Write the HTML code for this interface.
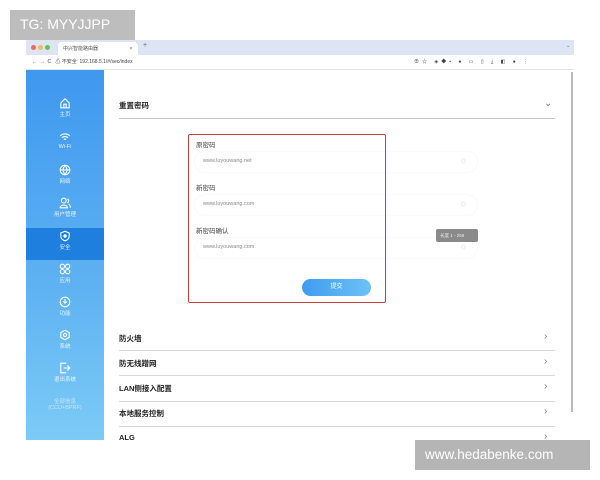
<!DOCTYPE html><html><head><meta charset="utf-8"><style>
*{margin:0;padding:0;box-sizing:border-box}
body{width:600px;height:480px;background:#fff;position:relative;overflow:hidden;font-family:"Liberation Sans","Noto Sans CJK SC",sans-serif}
.a{position:absolute}
.tabbar{left:26px;top:40px;width:548px;height:15px;background:#dde5f4}
.tab{left:58px;top:42px;width:80px;height:13px;background:#fff;border-radius:4px 4px 0 0;font-size:5px;color:#555;padding:3px 5px}
.addr{left:26px;top:55px;width:548px;height:15px;background:#fff;border-bottom:1px solid #e4e4e4;font-size:5px;color:#444}
.side{left:26px;top:70px;width:78px;height:370px;background:linear-gradient(#3f98ef,#5fb3f2 60%,#7ccbf6)}
.si{position:absolute;left:0;width:78px;text-align:center;color:#e8f4ff;font-size:5.5px}
.si svg{display:block;margin:0 auto 1px}
.sel{left:26px;top:228px;width:78px;height:32px;background:#1e7fdf}
.t{font-size:7.5px;color:#222;font-weight:bold}
.line{height:1px;background:#d8d8d8;left:119px;width:436px}
.chev{font-size:10px;color:#777;left:544px}
.inp{left:195px;width:282px;height:20px;border-radius:10px;background:#fff;box-shadow:0 0 2px #eee;font-size:5.5px;color:#888;padding:6px 8px}
.lbl{left:196px;font-size:6.5px;color:#444}
</style></head><body>
<div class="a" style="left:10px;top:10px;width:125px;height:30px;background:#bdbdbd;color:#fff;font-size:14px;padding:6px 10px">TG: MYYJJPP</div>
<div class="a tabbar"></div>
<div class="a" style="left:31px;top:45px;width:5px;height:5px;border-radius:50%;background:#ee6a5f"></div>
<div class="a" style="left:38px;top:45px;width:5px;height:5px;border-radius:50%;background:#f5bd4f"></div>
<div class="a" style="left:45px;top:45px;width:5px;height:5px;border-radius:50%;background:#61c454"></div>
<div class="a tab">中兴智能路由器 <span style="margin-left:30px">×</span></div>
<div class="a" style="left:143px;top:42px;font-size:7px;color:#666">+</div>
<div class="a" style="left:566px;top:43px;font-size:5px;color:#666">⌄</div>
<div class="a addr"><span class="a" style="left:6px;top:3px">←&nbsp;&nbsp;→&nbsp;&nbsp;C&nbsp;&nbsp;&nbsp;⚠ 不安全&nbsp;&nbsp;192.168.5.1/#/sec/index</span><span class="a" style="left:388px;top:3px;letter-spacing:3px">⊕☆ ◈◆▪ ● ▭ ▯ ⤓ ◧ ● ⋮</span></div>
<div class="a side"></div>
<div class="a sel"></div>
<div class="a" style="left:101px;top:241px;width:0;height:0;border:3px solid transparent;border-right-color:#fff"></div>
<div class="a" style="left:26px;top:70px;width:78px">
<div class="si" style="top:27px"><svg width="12" height="12" viewBox="0 0 10 10" fill="none" stroke="#fff" stroke-width=".9"><path d="M1.5 5 5 1.5 8.5 5V9h-7z M4 9V6h2v3"/></svg>主页</div>
<div class="si" style="top:61px"><svg width="12" height="12" viewBox="0 0 10 10" fill="none" stroke="#fff" stroke-width=".9"><path d="M1 4a6 6 0 0 1 8 0M2.5 5.5a4 4 0 0 1 5 0M4 7a2 2 0 0 1 2 0"/></svg>Wi-Fi</div>
<div class="si" style="top:94px"><svg width="12" height="12" viewBox="0 0 10 10" fill="none" stroke="#fff" stroke-width=".9"><circle cx="5" cy="5" r="4"/><path d="M1 5h8M5 1c-2 2.5-2 5.5 0 8M5 1c2 2.5 2 5.5 0 8"/></svg>网络</div>
<div class="si" style="top:127px"><svg width="12" height="12" viewBox="0 0 10 10" fill="none" stroke="#fff" stroke-width=".9"><circle cx="4" cy="3" r="2"/><path d="M1 9c0-3 6-3 6 0zM7 1.5a2 2 0 0 1 0 3.5M8 6c1 .5 1.5 1.5 1.5 3"/></svg>用户管理</div>
<div class="si" style="top:160px"><svg width="12" height="12" viewBox="0 0 10 10" fill="none" stroke="#fff" stroke-width=".9"><path d="M5 1 8.5 2.5V5c0 2-1.5 3.5-3.5 4C3 8.5 1.5 7 1.5 5V2.5z"/><circle cx="5" cy="5" r="1" fill="#fff"/></svg>安全</div>
<div class="si" style="top:193px"><svg width="12" height="12" viewBox="0 0 10 10" fill="none" stroke="#fff" stroke-width=".9"><circle cx="2.8" cy="2.8" r="1.8"/><circle cx="7.2" cy="2.8" r="1.8"/><circle cx="2.8" cy="7.2" r="1.8"/><circle cx="7.2" cy="7.2" r="1.8"/></svg>应用</div>
<div class="si" style="top:226px"><svg width="12" height="12" viewBox="0 0 10 10" fill="none" stroke="#fff" stroke-width=".9"><circle cx="5" cy="5" r="4"/><path d="M5 2.5v3.5M3.5 4.5 5 6l1.5-1.5"/></svg>功能</div>
<div class="si" style="top:259px"><svg width="12" height="12" viewBox="0 0 10 10" fill="none" stroke="#fff" stroke-width=".9"><path d="M5 1 8.5 3v4L5 9 1.5 7V3z"/><circle cx="5" cy="5" r="1.3"/></svg>系统</div>
<div class="si" style="top:292px"><svg width="12" height="12" viewBox="0 0 10 10" fill="none" stroke="#fff" stroke-width=".9"><path d="M6 1H1.5v8H6M4 5h5M7 3l2 2-2 2"/></svg>退出系统</div>
<div class="si" style="top:327px;opacity:.7">全部信息<br>(CCU+BPRF)</div>
</div>
<div class="a t" style="left:119px;top:100px">重置密码</div>
<div class="a chev" style="top:98px">⌄</div>
<div class="a line" style="top:118px;background:#c8c8c8"></div>
<div class="a lbl" style="top:139px">原密码</div>
<div class="a inp" style="top:152px">www.luyouwang.net</div>
<div class="a lbl" style="top:182px">新密码</div>
<div class="a inp" style="top:195px">www.luyouwang.com</div>
<div class="a lbl" style="top:225px">新密码确认</div>
<div class="a inp" style="top:238px">www.luyouwang.com</div>
<div class="a" style="left:461px;top:158px;font-size:5px;color:#ccc">◎</div>
<div class="a" style="left:461px;top:201px;font-size:5px;color:#ccc">◎</div>
<div class="a" style="left:461px;top:244px;font-size:5px;color:#ccc">◎</div>
<div class="a" style="left:436px;top:229px;width:42px;height:13px;background:#8a8a8a;border-radius:2px;color:#eee;font-size:4.5px;padding:4px 4px">长度 1 - 256</div>
<div class="a" style="left:302px;top:279px;width:69px;height:17px;border-radius:9px;background:linear-gradient(90deg,#3e9cef,#6cc2f6);color:#fff;font-size:6px;text-align:center;line-height:17px">提交</div>
<div class="a" style="left:188px;top:134px;width:198px;height:169px;border:1.5px solid #c0403c;border-radius:2px"></div>
<div class="a t" style="left:119px;top:333px">防火墙</div><div class="a chev" style="top:331px">›</div>
<div class="a line" style="top:350px"></div>
<div class="a t" style="left:119px;top:358px">防无线蹭网</div><div class="a chev" style="top:356px">›</div>
<div class="a line" style="top:375px"></div>
<div class="a t" style="left:119px;top:383px">LAN侧接入配置</div><div class="a chev" style="top:381px">›</div>
<div class="a line" style="top:401px"></div>
<div class="a t" style="left:119px;top:408px">本地服务控制</div><div class="a chev" style="top:406px">›</div>
<div class="a line" style="top:426px"></div>
<div class="a t" style="left:119px;top:433px;height:7px;overflow:hidden">ALG</div><div class="a chev" style="top:431px;height:9px;overflow:hidden">›</div>
<div class="a" style="left:571px;top:72px;width:2px;height:340px;background:#bbb"></div>
<div class="a" style="left:26px;top:440px;width:560px;height:40px;background:#fff"></div>
<div class="a" style="left:415px;top:440px;width:175px;height:30px;background:#b5b5b5;color:#fff;font-size:13.5px;padding:7px 10px">www.hedabenke.com</div>
</body></html>
